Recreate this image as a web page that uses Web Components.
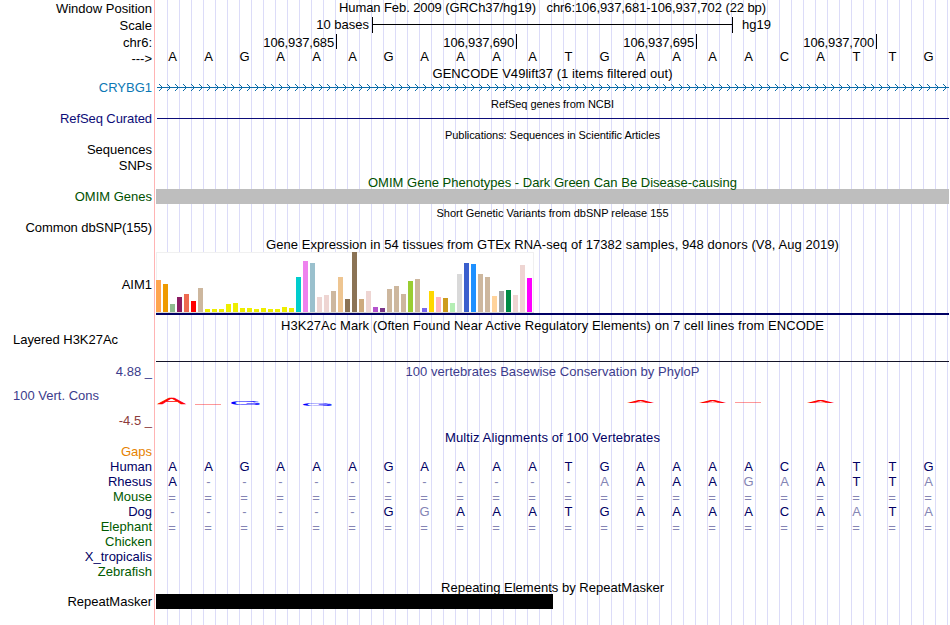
<!DOCTYPE html>
<html lang="en">
<head>
<meta charset="utf-8">
<title>Genome Browser</title>
<style>
  html, body { margin: 0; background: #fff; }
  body { width: 950px; height: 625px; overflow: hidden; font: 13px/15px "Liberation Sans", Arial, sans-serif; color: #000; }
</style>
</head>
<body>
<genome-browser>
  <browser-track label="Window Position" h="17" caption="Human Feb. 2009 (GRCh37/hg19) &nbsp; chr6:106,937,681-106,937,702 (22 bp)" fit="427" inline></browser-track>
  <browser-track label="Scale" h="17"><scale-bar from="10 bases" to="hg19"></scale-bar></browser-track>
  <browser-track label="chr6:" h="16"><position-ruler ticks="106,937,685|106,937,690|106,937,695|106,937,700"></position-ruler></browser-track>
  <browser-track label="---&gt;" h="15" dy="1"><base-row bases="AAGAAAGAAAATGAAAACATTG" dy="-1"></base-row></browser-track>

  <browser-track label="CRYBG1" color="#0c78b4" caption="GENCODE V49lift37 (1 items filtered out)" fit="240" cap="15" h="15"><gene-line color="#0c6ca8" arrows></gene-line></browser-track>
  <browser-track label="RefSeq Curated" label-fit="92" color="#0c0c78" caption="RefSeq genes from NCBI" small fit="123" cap="16" h="15"><gene-line color="#0c0c78"></gene-line></browser-track>
  <browser-track label="Sequences" caption="Publications: Sequences in Scientific Articles" small fit="215" cap="16" h="15"></browser-track>
  <browser-track label="SNPs" h="16"></browser-track>
  <browser-track label="OMIM Genes" color="#005000" caption="OMIM Gene Phenotypes - Dark Green Can Be Disease-causing" caption-color="#005000" fit="369" cap="16" h="15"><feature-block color="#bebebe"></feature-block></browser-track>
  <browser-track label="Common dbSNP(155)" label-fit="126.5" caption="Short Genetic Variants from dbSNP release 155" small fit="232" cap="16" h="15"></browser-track>
  <browser-track label="AIM1" caption="Gene Expression in 54 tissues from GTEx RNA-seq of 17382 samples, 948 donors (V8, Aug 2019)" fit="573" cap="17" h="64"><expression-chart></expression-chart></browser-track>
  <browser-track label="Layered H3K27Ac" label-fit="105" left dy="-8" caption="H3K27Ac Mark (Often Found Near Active Regulatory Elements) on 7 cell lines from ENCODE" fit="543" cap="17" h="29"><signal-baseline></signal-baseline></browser-track>
  <conservation-track></conservation-track>

  <browser-track label="Gaps" color="#e68200" caption="Multiz Alignments of 100 Vertebrates" caption-color="#000064" fit="215" cap="15" h="15"></browser-track>
  <browser-track label="Human" color="#000064" h="15"><base-row color="#000064" bases="AAGAAAGAAAATGAAAACATTG"></base-row></browser-track>
  <browser-track label="Rhesus" color="#000064" h="15"><base-row color="#000064" bases="A-----------aAAAgaATTa"></base-row></browser-track>
  <browser-track label="Mouse" color="#005a00" h="15"><base-row color="#000064" bases="======================"></base-row></browser-track>
  <browser-track label="Dog" color="#000064" h="15"><base-row color="#000064" bases="------GgAAATGAAAACAaTa"></base-row></browser-track>
  <browser-track label="Elephant" color="#005a00" h="15"><base-row color="#000064" bases="======================"></base-row></browser-track>
  <browser-track label="Chicken" color="#005a00" h="15"></browser-track>
  <browser-track label="X_tropicalis" color="#000064" h="15"></browser-track>
  <browser-track label="Zebrafish" color="#005a00" h="15"></browser-track>
  <browser-track label="RepeatMasker" caption="Repeating Elements by RepeatMasker" fit="223" cap="15" h="15"><feature-block color="#000" width="397"></feature-block></browser-track>
</genome-browser>

<script>
// spread letter spacing so that a span takes up a given width
function fitText(el, width) {
  if (!width) return;
  const n = el.textContent.length;
  el.style.letterSpacing = `${(width - el.getBoundingClientRect().width) / n}px`;
}

class GenomeBrowser extends HTMLElement {
  constructor() {
    super();
    this.attachShadow({ mode: "open" }).innerHTML = `
      <style>
        :host {
          display: flex;
          flex-direction: column;
          width: 949px;
          height: 625px;
          /* left divider, then a guide line every 12px */
          background:
            linear-gradient(#ffb4b4, #ffb4b4) 154px 0 / 1px 100% no-repeat,
            repeating-linear-gradient(90deg, #dcdcf8 0 1px, transparent 1px 12px) 167px 0 / 782px 100% no-repeat;
        }
      </style>
      <slot></slot>
    `;
  }
}

class BrowserTrack extends HTMLElement {
  constructor() {
    super();
    this.attachShadow({ mode: "open" }).innerHTML = `
      <style>
        :host { display: grid; grid-template-columns: 152px 793px; column-gap: 4px; flex: none; }
        .caption {
          grid-column: 2;
          display: flex;
          align-items: center;
          justify-content: center;
          white-space: pre;
          line-height: 15px;
        }
        .caption.small { font-size: 11px; }
        /* captions hang slightly into the track below them */
        .caption.above span { transform: translateY(1px); }
        .label {
          grid-column: 1;
          display: flex;
          align-items: center;
          justify-content: flex-end;
          white-space: nowrap;
        }
        .label.left { justify-content: flex-start; padding-left: 13px; }
        .body { grid-column: 2; min-width: 0; }
      </style>
      <div class="caption"><span></span></div>
      <div class="label"><span></span></div>
      <div class="body"><slot></slot></div>
    `;
  }

  connectedCallback() {
    const $ = (s) => this.shadowRoot.querySelector(s);
    const attr = (n) => this.getAttribute(n);
    const caption = $(".caption");
    const label = $(".label");
    const body = $(".body");

    label.firstChild.textContent = attr("label");
    label.style.color = attr("color") || "";
    label.style.height = body.style.height = `${attr("h")}px`;
    label.classList.toggle("left", this.hasAttribute("left"));
    if (attr("dy")) label.firstChild.style.transform = `translateY(${attr("dy")}px)`;
    fitText(label.firstChild, Number(attr("label-fit")));

    if (!attr("caption")) {
      caption.remove();
      return;
    }
    caption.firstChild.textContent = attr("caption");
    caption.style.color = attr("caption-color") || "";
    caption.classList.toggle("small", this.hasAttribute("small"));
    if (this.hasAttribute("inline")) {
      // caption shares the line of the label
      body.replaceWith(caption);
      caption.style.height = "15px";
    } else {
      caption.classList.add("above");
      caption.style.height = `${attr("cap")}px`;
    }
    fitText(caption.firstChild, Number(attr("fit")));
  }
}

class ScaleBar extends HTMLElement {
  connectedCallback() {
    this.attachShadow({ mode: "open" }).innerHTML = `
      <style>
        :host { display: flex; align-items: flex-start; height: 17px; line-height: 15px; white-space: nowrap; }
        .from { width: 213px; text-align: right; margin-right: 3px; }
        .bar { width: 361px; height: 16px; }
        .to { margin-left: 9px; }
      </style>
      <span class="from">${this.getAttribute("from")}</span>
      <svg class="bar" viewBox="0 0 361 16" shape-rendering="crispEdges">
        <path d="M.5 0V16M360.5 0V16M0 7.5H361" fill="none" stroke="#000"/>
      </svg>
      <span class="to">${this.getAttribute("to")}</span>
    `;
  }
}

class PositionRuler extends HTMLElement {
  connectedCallback() {
    const ticks = this.getAttribute("ticks").split("|");
    this.attachShadow({ mode: "open" }).innerHTML = `
      <style>
        :host { display: flex; height: 16px; padding-left: 1px; }
        span {
          box-sizing: border-box;
          width: 180px;
          height: 15px;
          padding-right: 2px;
          border-right: 1px solid #000;
          line-height: 17px;
          text-align: right;
          letter-spacing: -.15px;
        }
      </style>
      ${ticks.map((t) => `<span>${t}</span>`).join("")}
    `;
  }
}

// one letter per base; lower case means a faded letter
class BaseRow extends HTMLElement {
  connectedCallback() {
    const cells = [...this.getAttribute("bases")].map((b) => {
      const cls = b === "=" ? "eq" : b === "-" || b !== b.toUpperCase() ? "dim" : "";
      return `<span class="${cls}">${b.toUpperCase()}</span>`;
    });
    this.attachShadow({ mode: "open" }).innerHTML = `
      <style>
        :host { display: flex; height: 15px; margin-left: -1.5px; color: ${this.getAttribute("color") || "#000"}; }
        span { flex: none; width: 36px; text-align: center; transform: translateY(${this.getAttribute("dy") || 0}px); }
        .dim, .eq { color: #8484b4; }
        .eq { transform: translate(-.5px, 1px); }
      </style>
      ${cells.join("")}
    `;
  }
}

class GeneLine extends HTMLElement {
  connectedCallback() {
    let d = "";
    if (this.hasAttribute("arrows")) {
      for (let x = 3; x < 790; x += 8) d += `M${x} 4l3.5 3.5-3.5 3.5`;
    }
    this.attachShadow({ mode: "open" }).innerHTML = `
      <style>:host, svg { display: block; height: 15px; }</style>
      <svg width="793" viewBox="0 0 793 15" fill="none" stroke="${this.getAttribute("color")}">
        <path d="M1 7.5H793" shape-rendering="crispEdges"/>
        <path d="${d}"/>
      </svg>
    `;
  }
}

class FeatureBlock extends HTMLElement {
  connectedCallback() {
    const width = this.getAttribute("width");
    this.attachShadow({ mode: "open" }).innerHTML = `
      <style>
        :host { display: block; height: 15px; width: ${width ? width + "px" : "100%"}; background: ${this.getAttribute("color")}; }
      </style>
    `;
  }
}

// height in px and colour of each tissue
const TISSUES = [
  [32, "#ffa54f"], [28, "#ee9a00"], [8, "#8fbc8f"], [15, "#8b1c62"], [18, "#ee6a50"], [11, "#ff0000"],
  [24, "#cdb79e"], [3, "#eeee00"], [3, "#eeee00"], [3, "#eeee00"], [8, "#eeee00"], [9, "#eeee00"],
  [4, "#eeee00"], [4, "#eeee00"], [3, "#eeee00"], [4, "#eeee00"], [3, "#eeee00"], [3, "#eeee00"],
  [5, "#eeee00"], [4, "#eeee00"], [35, "#00cdcd"], [51, "#ee82ee"], [49, "#9ac0cd"], [15, "#eed5d2"],
  [17, "#eed5d2"], [21, "#cdb79e"], [35, "#eec591"], [13, "#8b7355"], [60, "#8b7355"], [13, "#cdaa7d"],
  [21, "#eed5d2"], [5, "#b452cd"], [4, "#7a378b"], [23, "#cdb79e"], [26, "#cdb79e"], [18, "#cdb79e"],
  [31, "#9acd32"], [33, "#cdb79e"], [4, "#7a67ee"], [21, "#ffd700"], [15, "#ffb6c1"], [14, "#cd9b1d"],
  [9, "#b4eeb4"], [38, "#d9d9d9"], [49, "#3a5fcd"], [48, "#1e90ff"], [38, "#cdb79e"], [35, "#cdb79e"],
  [16, "#ffd39b"], [21, "#a6a6a6"], [22, "#008b45"], [17, "#eed5d2"], [47, "#eed5d2"], [34, "#ff00ff"]
];

class ExpressionChart extends HTMLElement {
  connectedCallback() {
    const bars = TISSUES.map(([h, c]) => `<i style="height:${h}px;background:${c}"></i>`);
    this.attachShadow({ mode: "open" }).innerHTML = `
      <style>
        :host { display: block; height: 63px; }
        .plot {
          display: flex;
          align-items: flex-end;
          gap: 2px;
          width: 378px;
          height: 61px;
          box-sizing: border-box;
          background: #fff;
          border-bottom: 1px solid #d8d8d8;
          box-shadow: inset 1px 1px #f0f0f0, inset -1px 0 #f0f0f0;
        }
        i { width: 5px; }
        .base { height: 2px; background: #000064; }
      </style>
      <div class="plot">${bars.join("")}</div>
      <div class="base"></div>
    `;
  }
}

class SignalBaseline extends HTMLElement {
  connectedCallback() {
    this.attachShadow({ mode: "open" }).innerHTML = `
      <style>:host { display: block; box-sizing: border-box; height: 29px; border-bottom: 1px solid #141428; }</style>
    `;
  }
}

// letters of the logo: base, left edge, top, bottom and stroke width
const LOGO = [
  ["A", 158, 397.3, 403.5, 1.5], ["G", 231, 401, 404.5, .3], ["G", 303, 404, 405.9, .3],
  ["A", 627, 400, 403, 0], ["A", 699, 400, 403, 0], ["A", 807, 401, 403, 0]
];
// scores close to zero leave only a hairline
const HAIRLINES = [[195, 404], [735, 402]];

class ConservationTrack extends HTMLElement {
  connectedCallback() {
    const letters = LOGO.map(([b, x, top, bottom, stroke]) => {
      const size = b === "A" ? 41 : 43;
      const sy = (bottom - top) / (size * .72);
      const color = b === "A" ? "#f00" : "#00f";
      return `<text font-size="${size}" fill="${color}" stroke="${color}" stroke-width="${stroke}"
        transform="translate(${x - 156 - (b === "A" ? 0 : 2)} ${bottom - 380}) scale(1 ${sy})">${b}</text>`;
    });
    const lines = HAIRLINES.map(([x, y]) =>
      `<rect x="${x - 156}" y="${y - 380}" width="26" height="1" fill="#f00" fill-opacity=".4"/>`);
    this.attachShadow({ mode: "open" }).innerHTML = `
      <style>
        :host { display: grid; grid-template-columns: 152px 793px; column-gap: 4px; height: 67px; flex: none; color: #3c3c8c; }
        .labels, .plot { display: flex; flex-direction: column; }
        .labels { text-align: right; padding-top: 2px; }
        .name { text-align: left; padding: 9px 0 10px 13px; }
        .min { color: #8c3c3c; }
        .caption { text-align: center; padding-top: 2px; height: 16px; }
        svg { display: block; overflow: visible; }
      </style>
      <div class="labels">
        <span>4.88 _</span>
        <span class="name">100 Vert. Cons</span>
        <span class="min">-4.5 _</span>
      </div>
      <div class="plot">
        <div class="caption"><span>100 vertebrates Basewise Conservation by PhyloP</span></div>
        <svg width="793" height="40" viewBox="0 0 793 40">${letters.join("")}${lines.join("")}</svg>
      </div>
    `;
    fitText(this.shadowRoot.querySelector(".caption span"), 294);
  }
}

customElements.define("genome-browser", GenomeBrowser);
customElements.define("scale-bar", ScaleBar);
customElements.define("position-ruler", PositionRuler);
customElements.define("base-row", BaseRow);
customElements.define("gene-line", GeneLine);
customElements.define("feature-block", FeatureBlock);
customElements.define("expression-chart", ExpressionChart);
customElements.define("signal-baseline", SignalBaseline);
customElements.define("conservation-track", ConservationTrack);
customElements.define("browser-track", BrowserTrack);
</script>
</body>
</html>
